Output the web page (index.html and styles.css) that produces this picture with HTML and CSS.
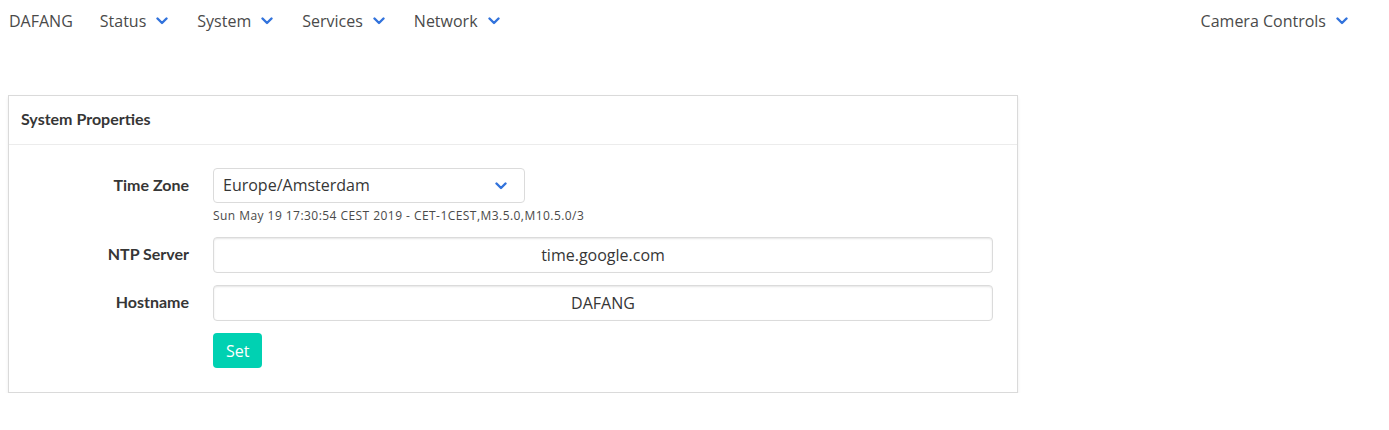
FILE: index.html
```html
<!DOCTYPE html>
<html>
<head>
<meta charset="utf-8">
<link rel="stylesheet" href="styles.css">
</head>
<body>
<nav class="navbar">
  <div class="nav-start">
    <a class="nav-item brand">DAFANG</a>
    <a class="nav-item nav-link">Status <svg class="chev" viewBox="0 0 12 8"><polyline points="1.5,1.5 6,6 10.5,1.5"/></svg></a>
    <a class="nav-item nav-link">System <svg class="chev" viewBox="0 0 12 8"><polyline points="1.5,1.5 6,6 10.5,1.5"/></svg></a>
    <a class="nav-item nav-link">Services <svg class="chev" viewBox="0 0 12 8"><polyline points="1.5,1.5 6,6 10.5,1.5"/></svg></a>
    <a class="nav-item nav-link">Network <svg class="chev" viewBox="0 0 12 8"><polyline points="1.5,1.5 6,6 10.5,1.5"/></svg></a>
  </div>
  <div class="nav-end">
    <a class="nav-item nav-link">Camera Controls <svg class="chev" viewBox="0 0 12 8"><polyline points="1.5,1.5 6,6 10.5,1.5"/></svg></a>
  </div>
</nav>
<section class="main">
  <div class="card">
    <header class="card-header">System Properties</header>
    <div class="card-content">
      <div class="field">
        <div class="field-label">Time Zone</div>
        <div class="field-body">
          <div class="select-wrap">
            <div class="select">Europe/Amsterdam
              <svg class="chev sel-chev" viewBox="0 0 12 8"><polyline points="1.5,1.5 6,6 10.5,1.5"/></svg>
            </div>
          </div>
          <p class="help">Sun May 19 17:30:54 CEST 2019 - CET-1CEST,M3.5.0,M10.5.0/3</p>
        </div>
      </div>
      <div class="field">
        <div class="field-label">NTP Server</div>
        <div class="field-body">
          <div class="input">time.google.com</div>
        </div>
      </div>
      <div class="field">
        <div class="field-label">Hostname</div>
        <div class="field-body">
          <div class="input">DAFANG</div>
        </div>
      </div>
      <div class="field">
        <div class="field-label"></div>
        <div class="field-body">
          <div class="btn-row"><button class="button">Set</button></div>
        </div>
      </div>
    </div>
  </div>
</section>
</body>
</html>
```
FILE: styles.css
```css
html, body {
  margin: 0;
  padding: 0;
  background: #fff;
}
body {
  font-family: "Open Sans", "Noto Sans", sans-serif;
  font-size: 16px;
  line-height: 1.5;
  color: #4a4a4a;
}
.navbar {
  display: flex;
  justify-content: space-between;
  height: 42px;
  padding: 0 24px 0 0;
}
.nav-start, .nav-end {
  display: flex;
  align-items: center;
}
.nav-item {
  display: flex;
  align-items: center;
  color: #4a4a4a;
  padding: 0 12px;
  white-space: nowrap;
}
.brand {
  padding-left: 9px;
  padding-right: 15px;
}
.nav-link {
  padding-right: 17px;
}
.chev {
  width: 12px;
  height: 8px;
  margin-left: 10px;
  fill: none;
  stroke: #3273dc;
  stroke-width: 2.4;
  stroke-linecap: round;
  stroke-linejoin: round;
}
.main {
  padding: 53px 0 0 8px;
}
.card {
  width: 1010px;
  box-sizing: border-box;
  background: #fff;
  border: 1px solid #dadada;
  box-shadow: 0 2px 3px rgba(10,10,10,0.08);
  color: #4a4a4a;
}
.card-header {
  padding: 11px 12px 13px;
  font-family: "Lato", "Open Sans", sans-serif;
  font-weight: 700;
  font-size: 16px;
  line-height: 24px;
  color: #363636;
  border-bottom: 1px solid #ececec;
}
.card-content {
  padding: 23px 24px 24px 24px;
}
.field {
  display: flex;
  margin-bottom: 12px;
}
.field:last-child {
  margin-bottom: 0;
}
.field-label {
  flex: 1 1 0;
  margin-right: 24px;
  text-align: right;
  font-family: "Lato", "Open Sans", sans-serif;
  font-weight: 700;
  color: #363636;
  padding-top: 5px;
  line-height: 24px;
}
.field-body {
  flex: 5 1 0;
}
.select-wrap {
  display: flex;
}
.select {
  position: relative;
  width: 312px;
  height: 35px;
  box-sizing: border-box;
  border: 1px solid #dbdbdb;
  border-radius: 4px;
  padding: 4px 0 0 9px;
  color: #363636;
  line-height: 24px;
}
.sel-chev {
  position: absolute;
  right: 17px;
  top: 13px;
  margin: 0;
}
.help {
  margin: 4px 0 0;
  font-size: 12px;
  letter-spacing: 0.45px;
  line-height: 18px;
  color: #4a4a4a;
}
.input {
  height: 36px;
  box-sizing: border-box;
  border: 1px solid #dbdbdb;
  border-radius: 4px;
  box-shadow: inset 0 1px 2px rgba(10,10,10,0.1);
  text-align: center;
  color: #363636;
  padding-top: 5px;
  line-height: 24px;
}
.button {
  font-family: inherit;
  font-size: 16px;
  line-height: 24px;
  height: 35px;
  padding: 0 12px;
  background: #00d1b2;
  color: #fff;
  border: 1px solid transparent;
  border-radius: 4px;
}
```
